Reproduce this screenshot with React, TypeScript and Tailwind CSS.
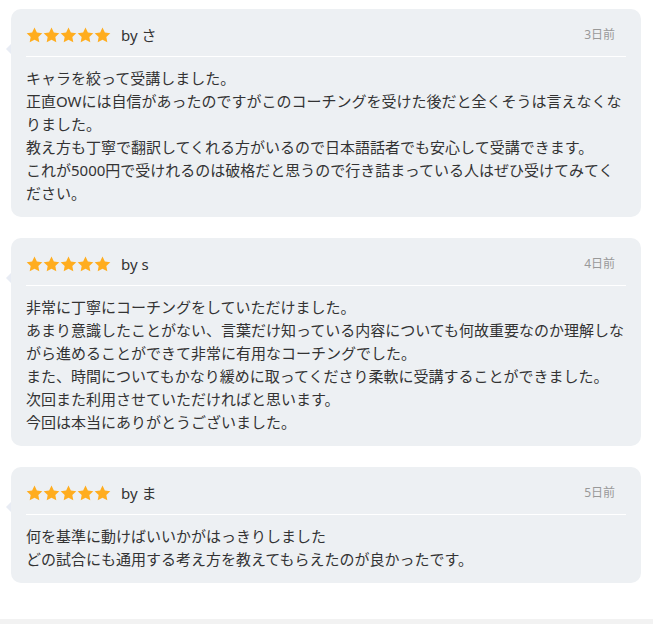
import React from "react";

type Review = { author: string; ago: string; lines: string[] };

const reviews: Review[] = [
  {
    author: "さ",
    ago: "3日前",
    lines: [
      "キャラを絞って受講しました。",
      "正直OWには自信があったのですがこのコーチングを受けた後だと全くそうは言えなくなりました。",
      "教え方も丁寧で翻訳してくれる方がいるので日本語話者でも安心して受講できます。",
      "これが5000円で受けれるのは破格だと思うので行き詰まっている人はぜひ受けてみてください。",
    ],
  },
  {
    author: "s",
    ago: "4日前",
    lines: [
      "非常に丁寧にコーチングをしていただけました。",
      "あまり意識したことがない、言葉だけ知っている内容についても何故重要なのか理解しながら進めることができて非常に有用なコーチングでした。",
      "また、時間についてもかなり緩めに取ってくださり柔軟に受講することができました。",
      "次回また利用させていただければと思います。",
      "今回は本当にありがとうございました。",
    ],
  },
  {
    author: "ま",
    ago: "5日前",
    lines: [
      "何を基準に動けばいいかがはっきりしました",
      "どの試合にも通用する考え方を教えてもらえたのが良かったです。",
    ],
  },
];

function Star() {
  return (
    <svg width="17" height="16" viewBox="0 0 24 23" className="shrink-0">
      <path
        d="M12 0.8l3.4 7.1 7.8 1-5.7 5.4 1.4 7.7L12 18.3 5.1 22l1.4-7.7L0.8 8.9l7.8-1z"
        fill="#ffad1f"
      />
    </svg>
  );
}

function ReviewCard({ review }: { review: Review }) {
  return (
    <div className="relative rounded-[10px] bg-[#edf0f3] px-[15px]">
      <div className="absolute left-[-5px] top-[35px] h-0 w-0 border-y-[5px] border-r-[5px] border-y-transparent border-r-[#e8ecf4]" />
      <div className="flex items-center border-b border-white pt-[17px] pb-[12px]">
        <div className="flex items-center">
          <Star />
          <Star />
          <Star />
          <Star />
          <Star />
        </div>
        <span className="ml-[10px] text-[15px] leading-[18px] text-[#333]">by {review.author}</span>
        <span className="ml-auto pr-[11px] text-[12px] leading-[18px] text-[#999]">{review.ago}</span>
      </div>
      <div className="pt-[10px] pb-[12px] text-[15px] leading-[23px] text-[#333]">
        {review.lines.map((l, i) => (
          <p key={i}>{l}</p>
        ))}
      </div>
    </div>
  );
}

export default function App() {
  return (
    <div
      className="min-h-[624px] bg-white"
      style={{ fontFamily: '"Noto Sans", "Noto Sans CJK JP", sans-serif' }}
    >
      <div className="flex flex-col gap-[21px] pt-[9px] pb-[36px] pl-[11px] pr-[12px]">
        {reviews.map((r, i) => (
          <ReviewCard key={i} review={r} />
        ))}
      </div>
      <div className="h-[10px] bg-[#f2f2f2]" />
    </div>
  );
}
